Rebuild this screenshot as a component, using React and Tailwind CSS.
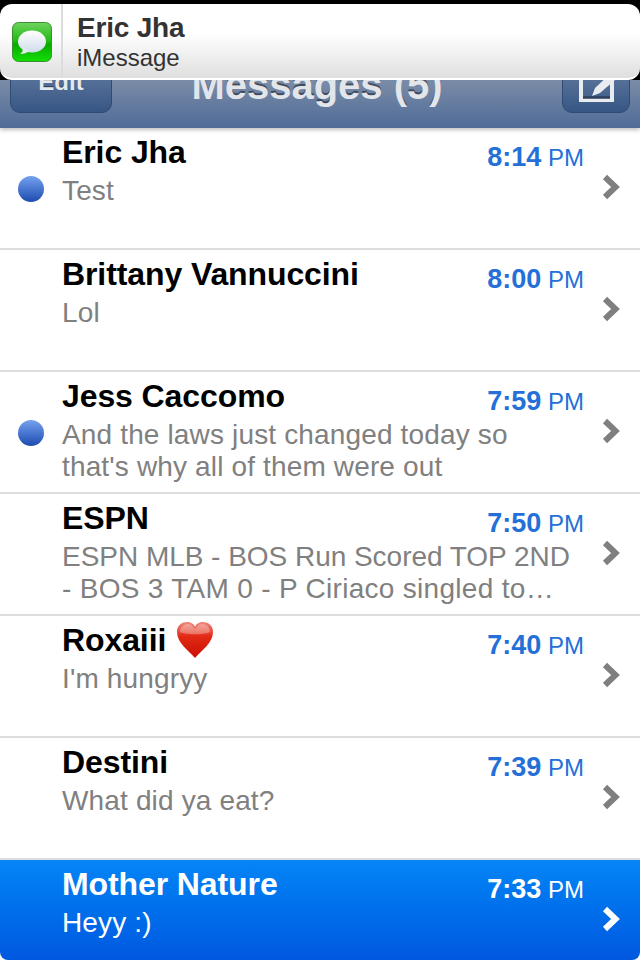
import React from "react";

const ROWS = [
  { name: "Eric Jha", time: "8:14", lines: ["Test"], unread: true },
  { name: "Brittany Vannuccini", time: "8:00", lines: ["Lol"] },
  {
    name: "Jess Caccomo",
    time: "7:59",
    lines: ["And the laws just changed today so", "that's why all of them were out"],
    unread: true,
  },
  {
    name: "ESPN",
    time: "7:50",
    lines: ["ESPN MLB - BOS Run Scored TOP 2ND", "- BOS 3 TAM 0 - P Ciriaco singled to…"],
    caps: true,
  },
  { name: "Roxaiii", time: "7:40", lines: ["I'm hungryy"], heart: true },
  { name: "Destini", time: "7:39", lines: ["What did ya eat?"] },
  { name: "Mother Nature", time: "7:33", lines: ["Heyy :)"], selected: true },
];

function Heart() {
  return (
    <svg width="36" height="38" viewBox="0 0 36 38" className="ml-[11px]">
      <defs>
        <linearGradient id="heartFill" x1="0" y1="0" x2="0" y2="1">
          <stop offset="0" stopColor="#f08a80" />
          <stop offset="0.4" stopColor="#e22a14" />
          <stop offset="1" stopColor="#c90f05" />
        </linearGradient>
      </defs>
      <path
        d="M18 37C12 30 0 22 0 11C0 4 5 1 10 1C14 1 17 3 18 6C19 3 22 1 26 1C31 1 36 4 36 11C36 22 24 30 18 37Z"
        fill="url(#heartFill)"
      />
      <path
        d="M3 11C3 6 7 3 11 3C14 3 16 5 18 8C20 5 22 3 25 3C29 3 33 6 33 11C27 14 9 14 3 11Z"
        fill="#ffffff"
        opacity="0.3"
      />
    </svg>
  );
}

function Chevron({ selected }) {
  return (
    <svg width="18" height="26" viewBox="0 0 18 26">
      <path
        d="M3 3L13.5 13L3 23"
        fill="none"
        stroke={selected ? "#ffffff" : "#7f7f7f"}
        strokeWidth="6"
      />
    </svg>
  );
}

function MessagesIcon() {
  return (
    <svg width="40" height="40" viewBox="0 0 40 40">
      <defs>
        <linearGradient id="iconFill" x1="0" y1="0" x2="0" y2="1">
          <stop offset="0" stopColor="#6fd35f" />
          <stop offset="0.5" stopColor="#1cb80e" />
          <stop offset="0.55" stopColor="#0aa800" />
          <stop offset="1" stopColor="#12e006" />
        </linearGradient>
        <linearGradient id="bubbleFill" x1="0" y1="0" x2="0" y2="1">
          <stop offset="0" stopColor="#ffffff" />
          <stop offset="1" stopColor="#cfdcea" />
        </linearGradient>
      </defs>
      <rect x="0.5" y="0.5" width="39" height="39" rx="6" fill="url(#iconFill)" stroke="#3c8f30" />
      <ellipse cx="20" cy="19.5" rx="14" ry="11" fill="url(#bubbleFill)" />
      <path d="M11 26C11 29 10 31 8 32C12 32 15 31 17 29Z" fill="#e4ebf2" />
    </svg>
  );
}

export default function App() {
  return (
    <div className="relative h-[960px] w-[640px] overflow-hidden rounded-b-[8px] bg-white font-['Liberation_Sans',Arial,sans-serif]">
      {/* Nav bar, mostly hidden by the banner */}
      <div className="relative z-10 flex h-[128px] items-end justify-between bg-gradient-to-b from-[#8a9ab2] via-[#788aa6] via-65% to-[#4f6b97] px-[10px] pb-[15px] shadow-[0_2px_4px_rgba(0,0,0,0.25)]">
        <div className="flex h-[60px] w-[102px] items-end justify-center rounded-[10px] border border-[#2f4a73] bg-gradient-to-b from-[#6f86a8] to-[#375684] pb-[16px] text-[24px] font-bold leading-[28px] text-[#e6e9ee] [text-shadow:0_-1px_0_rgba(0,0,0,0.5)]">
          Edit
        </div>
        <div className="mb-[5px] mr-[40px] text-[40px] font-bold leading-[46px] text-[#e2e5ea] [text-shadow:0_-2px_0_rgba(0,0,0,0.45)]">
          Messages (5)
        </div>
        <div className="flex h-[60px] w-[68px] items-end justify-center rounded-[10px] border border-[#2f4a73] bg-gradient-to-b from-[#6f86a8] to-[#375684] pb-[10px]">
          <svg width="38" height="40" viewBox="0 0 38 40">
            <path d="M4 0V38H35V0" fill="none" stroke="#e8ebef" strokeWidth="4" />
            <path d="M6 35.5H33" stroke="#2c3e5c" strokeWidth="2.5" />
            <path d="M15 34L18 26L33 12L38 18L23 31Z" fill="#e8ebef" />
          </svg>
        </div>
      </div>

      {/* Message list */}
      {ROWS.map((row) => (
        <div
          key={row.name}
          className={
            row.selected
              ? "flex h-[100px] items-start bg-gradient-to-b from-[#0785f6] to-[#0058e0]"
              : "flex h-[122px] items-start border-b-2 border-[#dddddd] bg-white"
          }
        >
          <div className="flex w-[62px] shrink-0 justify-center pt-[48px]">
            {row.unread && (
              <div className="h-[26px] w-[26px] rounded-full bg-gradient-to-b from-[#76a2ef] to-[#1d4bb0]" />
            )}
          </div>
          <div className="w-[522px] shrink-0">
            <div className="flex items-start justify-between">
              <div
                className={`flex h-[48px] items-center text-[32px] font-bold leading-[36px] tracking-[-0.1px] ${
                  row.selected ? "text-white" : "text-black"
                }`}
              >
                {row.name}
                {row.heart && <Heart />}
              </div>
              <div
                className={`pt-[12px] text-[24px] leading-[34px] ${
                  row.selected ? "text-white" : "text-[#2470d8]"
                }`}
              >
                <span className="text-[27px] font-bold">{row.time}</span> PM
              </div>
            </div>
            <div
              className={`-mt-[1px] text-[28px] leading-[32px] ${
                row.selected ? "text-white" : "text-[#808080]"
              }`}
            >
              {row.lines.map((line, i) => (
                <div
                  key={line}
                  className={`whitespace-nowrap ${
                    !row.caps ? "tracking-[0.15px]" : i === 0 ? "tracking-[-0.03px]" : "tracking-[0.3px]"
                  }`}
                >
                  {line}
                </div>
              ))}
            </div>
          </div>
          <div className="flex flex-1 justify-center pr-[3px] pt-[46px]">
            <Chevron selected={row.selected} />
          </div>
        </div>
      ))}

      {/* Notification banner */}
      <div className="absolute left-0 top-0 z-20 w-full bg-black pt-[4px]">
        <div className="flex h-[76px] items-stretch rounded-[12px] border-b-2 border-white bg-gradient-to-b from-white from-40% to-[#dfdfdf]">
          <div className="flex w-[63px] shrink-0 items-center justify-center border-r-2 border-[#dcdcdc] pl-[2px] pt-[2px]">
            <MessagesIcon />
          </div>
          <div className="pl-[14px] pt-[8px] text-[#333333]">
            <div className="text-[28px] font-bold leading-[32px] tracking-[-0.2px]">Eric Jha</div>
            <div className="text-[24px] leading-[28px]">iMessage</div>
          </div>
        </div>
      </div>
    </div>
  );
}
